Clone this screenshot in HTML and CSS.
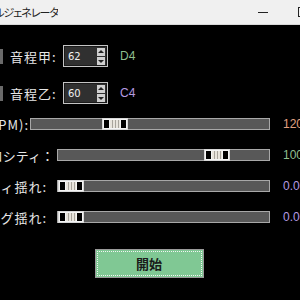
FILE: index.html
```html
<!DOCTYPE html>
<html>
<head>
  <meta charset="utf-8">
  <link rel="stylesheet" href="styles.css">
</head>
<body>
<div class="window">
  <!-- title bar -->
  <div class="titlebar">
    <div class="title"><span>MIDIサンプルジェネレータ</span></div>
    <div class="caption">
      <div class="cap-btn"><span class="cap-min"></span></div>
      <div class="cap-btn"><span class="cap-max"></span></div>
    </div>
  </div>

  <div class="main">
    <!-- pitch rows -->
    <div class="pitch-row first">
      <div class="check"></div>
      <div class="pitch-label">音程甲:</div>
      <div class="spinbox">
        <span class="spin-value">62</span>
        <div class="spin-arrows">
          <div class="arrow up"></div>
          <div class="arrow down"></div>
        </div>
      </div>
      <div class="note note-green">D4</div>
    </div>
    <div class="pitch-row">
      <div class="check"></div>
      <div class="pitch-label">音程乙:</div>
      <div class="spinbox">
        <span class="spin-value">60</span>
        <div class="spin-arrows">
          <div class="arrow up"></div>
          <div class="arrow down"></div>
        </div>
      </div>
      <div class="note note-purple">C4</div>
    </div>

    <!-- sliders -->
    <div class="sliders">
      <div class="slider-row">
        <div class="slider-label short"><span>テンポ(BPM):</span></div>
        <div class="trough wide">
          <div class="handle" style="margin-left: calc((100% - 26px) * 0.333)">
            <span class="knob"></span><span class="grip"></span><span class="knob"></span>
          </div>
        </div>
        <div class="value value-orange">120</div>
      </div>
      <div class="slider-row">
        <div class="slider-label fullcolon"><span>ベロシティ：</span></div>
        <div class="trough">
          <div class="handle" style="margin-left: calc((100% - 26px) * 0.787)">
            <span class="knob"></span><span class="grip"></span><span class="knob"></span>
          </div>
        </div>
        <div class="value value-green">100</div>
      </div>
      <div class="slider-row">
        <div class="slider-label"><span>ベロシティ揺れ:</span></div>
        <div class="trough">
          <div class="handle" style="margin-left: 0">
            <span class="knob"></span><span class="grip"></span><span class="knob"></span>
          </div>
        </div>
        <div class="value value-purple">0.00</div>
      </div>
      <div class="slider-row">
        <div class="slider-label"><span>タイミング揺れ:</span></div>
        <div class="trough">
          <div class="handle" style="margin-left: 0">
            <span class="knob"></span><span class="grip"></span><span class="knob"></span>
          </div>
        </div>
        <div class="value value-purple">0.00</div>
      </div>
    </div>

    <button class="start-btn">開始</button>
  </div>
</div>
</body>
</html>
```

FILE: styles.css
```css
* {
  margin: 0;
  padding: 0;
  box-sizing: border-box;
}

body {
  width: 300px;
  height: 300px;
  overflow: hidden;
  background: #000;
  font-family: "Noto Sans CJK JP", "Liberation Sans", sans-serif;
}

/* title bar */
.titlebar {
  height: 25px;
  background: #f0f0f0;
  border-bottom: 1px solid #d8d8d8;
  display: flex;
  align-items: center;
  justify-content: space-between;
}

.title {
  width: 58px;
  display: flex;
  justify-content: flex-end;
  overflow: hidden;
  white-space: nowrap;
  font-size: 11px;
  letter-spacing: -1px;
  font-feature-settings: "palt";
  color: #222;
}

.caption {
  display: flex;
  margin-right: -23px;
  height: 100%;
}

.cap-btn {
  width: 40px;
  display: flex;
  align-items: center;
  justify-content: center;
}

.cap-min {
  width: 10px;
  height: 1px;
  background: #222;
}

.cap-max {
  width: 10px;
  height: 10px;
  border: 1px solid #222;
}

/* main area */
.main {
  color: #e6e6e6;
}

.pitch-row {
  display: flex;
  align-items: center;
  height: 22px;
  margin-top: 15px;
}

.pitch-row.first {
  margin-top: 20px;
}

.check {
  width: 3px;
  height: 15px;
  background: #6a6a6a;
  margin-right: 7px;
}

.pitch-label {
  width: 53px;
  font-size: 13px;
  letter-spacing: 1px;
}

.spinbox {
  width: 45px;
  height: 22px;
  border: 1px solid #c4c4c4;
  box-shadow: inset 0 0 0 1px #1a1a1a;
  background: #303030;
  display: flex;
  align-items: center;
  justify-content: space-between;
  padding: 0 2px 0 4px;
}

.spin-value {
  font-family: "DejaVu Sans", sans-serif;
  font-size: 10px;
  color: #f0f0f0;
}

.spin-arrows {
  display: flex;
  flex-direction: column;
  gap: 1px;
}

.arrow {
  width: 8px;
  height: 8px;
  background: #d0d0d0;
  position: relative;
}

.arrow::after {
  content: "";
  position: absolute;
  left: 1px;
  border-left: 3px solid transparent;
  border-right: 3px solid transparent;
}

.arrow.up::after {
  top: 2px;
  border-bottom: 3px solid #222;
}

.arrow.down::after {
  top: 3px;
  border-top: 3px solid #222;
}

.note {
  margin-left: 12px;
  font-family: "Liberation Sans", sans-serif;
  font-size: 12px;
}

.note-green { color: #8fbf8f; }
.note-purple { color: #b49ae0; }

/* sliders */
.sliders {
  margin-top: 10px;
  display: flex;
  flex-direction: column;
  gap: 11px;
}

.slider-row {
  display: flex;
  align-items: center;
  height: 20px;
}

.slider-row > * {
  flex-shrink: 0;
}

.slider-label {
  width: 57px;
  padding-right: 10px;
  display: flex;
  justify-content: flex-end;
  overflow: hidden;
  white-space: nowrap;
  font-size: 13px;
  letter-spacing: 1px;
}

.slider-label.fullcolon {
  padding-right: 3px;
  letter-spacing: 0;
}

.slider-label.short {
  width: 30px;
  padding-right: 1px;
}

.trough {
  width: 213px;
  height: 12px;
  background: #585858;
  border: 1px solid #a8a8a8;
  display: flex;
}

.trough.wide {
  width: 240px;
}

.handle {
  width: 26px;
  height: 12px;
  margin-top: -1px;
  border: 1px solid #d8d8d8;
  background: #d8d4cc;
  display: flex;
}

.knob {
  width: 7px;
  background: #000;
  border: 1px solid #f4f4f4;
}

.grip {
  flex: 1;
  background: repeating-linear-gradient(90deg, #e8e4dc 0 2px, #a8a49c 2px 3px);
  border-top: 1px solid #f4f4f4;
  border-bottom: 1px solid #f4f4f4;
}

.value {
  margin-left: 13px;
  font-family: "Liberation Sans", sans-serif;
  font-size: 12px;
  white-space: nowrap;
}

.value-orange { color: #e0a080; }
.value-green { color: #8fbf8f; }
.value-purple { color: #b49ae0; }

/* start button */
.start-btn {
  display: block;
  width: 109px;
  height: 29px;
  margin: 22px auto 0;
  background: #80c894;
  border: 1px solid #9a9a9a;
  outline: 1px dotted #f4f4f4;
  outline-offset: -3px;
  font-family: "Noto Sans CJK JP", sans-serif;
  font-size: 13px;
  font-weight: bold;
  color: #1a1a1a;
  position: relative;
  left: -1px;
}
```
